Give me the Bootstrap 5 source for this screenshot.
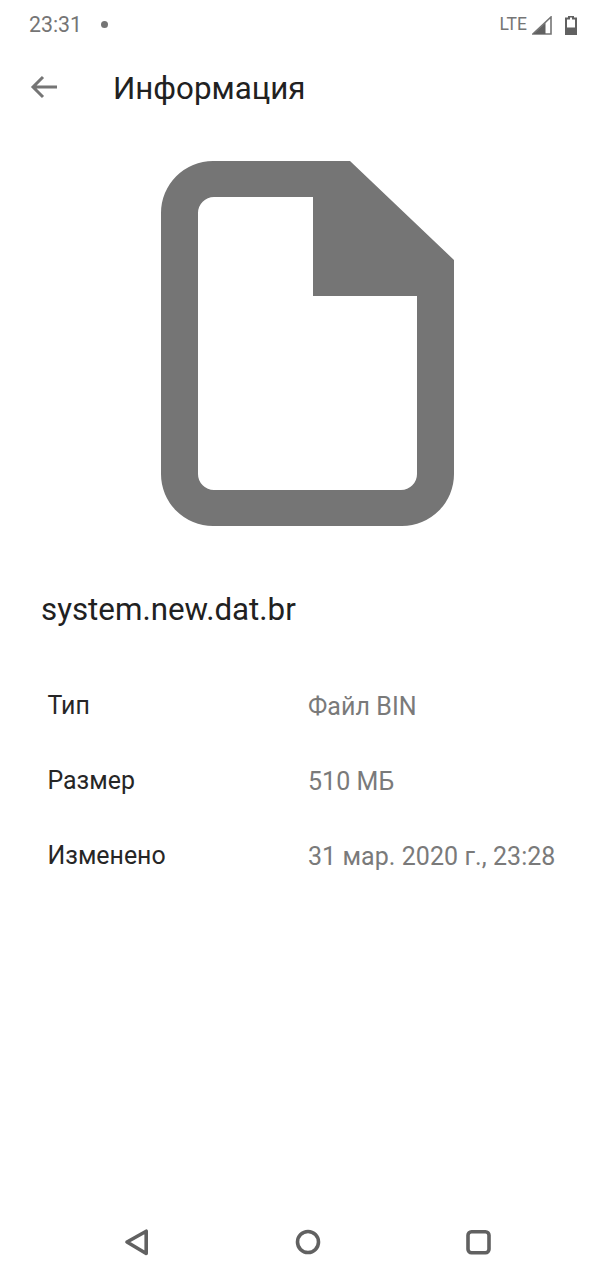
<!DOCTYPE html>
<html lang="ru">
<head>
<meta charset="utf-8">
<meta name="viewport" content="width=device-width, initial-scale=1">
<link href="https://cdn.jsdelivr.net/npm/bootstrap@5.3.0/dist/css/bootstrap.min.css" rel="stylesheet">
<style>
html,body{height:100%}
body{font-family:Roboto,"Liberation Sans",sans-serif;background:#fff;color:#212121;width:615px;height:1280px;overflow:hidden}
.phone{height:1280px}
.status-row{height:50px;padding:0 38px 0 29px;color:#757575}
.clock{font-size:21.3px;line-height:1;width:72px}
.dot-mark{width:7px;height:7px;border-radius:50%;background:#757575;margin-top:-2px}
.lte{font-size:17.5px;line-height:1;margin-right:5px}
.sig-ico{margin-right:13px}
.app-row{height:76px;padding-left:30px}
.back-ico{width:28px;height:24px;margin-right:55px;margin-top:-2px}
.app-title{font-size:31.3px;font-weight:400;line-height:1;margin:1px 0 0;color:#212121}
.file-box{padding-top:35px;padding-left:161px}
.file-name{font-size:31.3px;line-height:1;margin:68px 0 0 41px;color:#212121}
.info-list{margin:69px 0 0 47px}
.info-row{height:75px;font-size:25px;line-height:1}
.info-key{width:261px;padding-left:.5px;color:#262626;font-size:24.9px}
.info-val{color:#7a7a7a;letter-spacing:.06px}
.nav-row{height:70px;padding-bottom:2px}
</style>
</head>
<body>
<div class="phone d-flex flex-column">
  <div class="status-row d-flex align-items-center">
    <span class="clock">23:31</span>
    <span class="dot-mark"></span>
    <span class="ms-auto lte">LTE</span>
    <svg width="20" height="19" viewBox="0 0 20 19" class="sig-ico" aria-hidden="true"><path d="M19 1V18H1Z" fill="none" stroke="#757575" stroke-width="1.6"/><path d="M13.5 7V18H1.5Z" fill="#616161"/></svg>
    <svg width="12" height="19" viewBox="0 0 12 19" aria-hidden="true"><path d="M4 0.5H8V2.5H11V18H1V2.5H4Z" fill="none" stroke="#616161" stroke-width="2"/><rect x="1" y="11.5" width="10" height="6.5" fill="#616161"/></svg>
  </div>
  <div class="app-row d-flex align-items-center">
    <svg class="back-ico" viewBox="0 0 28 24" aria-hidden="true"><path d="M27 12H3M13 2L3 12L13 22" fill="none" stroke="#757575" stroke-width="3"/></svg>
    <h1 class="app-title">Информация</h1>
  </div>
  <div class="file-box">
    <svg width="293" height="365" viewBox="0 0 293 365" class="d-block" aria-hidden="true"><path fill="#757575" fill-rule="evenodd" d="M52 0H189L293 99V313A52 52 0 0 1 241 365H52A52 52 0 0 1 0 313V52A52 52 0 0 1 52 0ZM53 36A16 16 0 0 0 37 52V313A16 16 0 0 0 53 329H240A16 16 0 0 0 256 313V135H152V36Z"/></svg>
  </div>
  <div class="file-name">system.new.dat.br</div>
  <div class="info-list">
    <div class="info-row d-flex"><span class="info-key">Тип</span><span class="info-val">Файл BIN</span></div>
    <div class="info-row d-flex"><span class="info-key">Размер</span><span class="info-val">510 МБ</span></div>
    <div class="info-row d-flex"><span class="info-key">Изменено</span><span class="info-val">31 мар. 2020 г., 23:28</span></div>
  </div>
  <div class="nav-row mt-auto d-flex">
    <svg width="615" height="68" viewBox="0 0 615 68" aria-hidden="true">
      <path d="M127 32L146.2 21.2V43.5Z" fill="none" stroke="#616161" stroke-width="3.6" stroke-linejoin="round"/>
      <circle cx="308" cy="32" r="10.5" fill="none" stroke="#616161" stroke-width="3.6"/>
      <rect x="468" y="21.8" width="21" height="21" rx="3.5" fill="none" stroke="#616161" stroke-width="3.6"/>
    </svg>
  </div>
</div>
<script src="https://cdn.jsdelivr.net/npm/bootstrap@5.3.0/dist/js/bootstrap.bundle.min.js"></script>
</body>
</html>
